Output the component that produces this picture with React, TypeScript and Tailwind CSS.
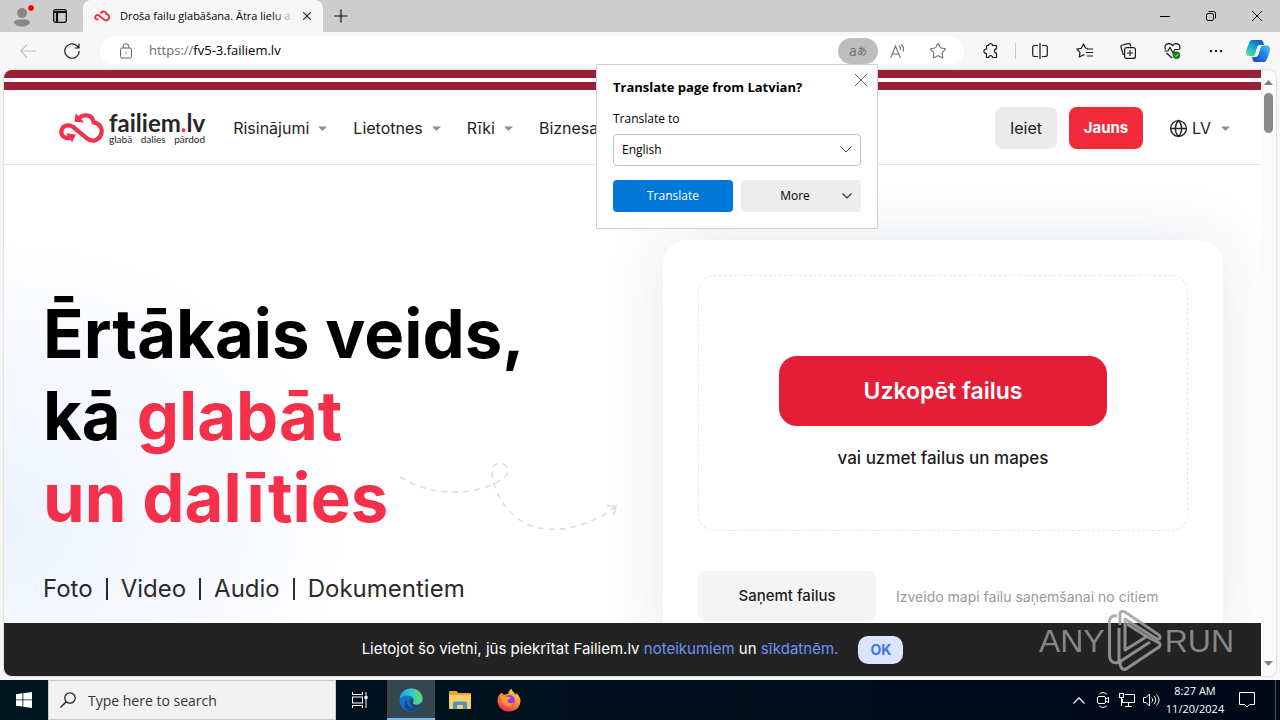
import type { ReactNode } from "react";
import { Globe, Star } from "lucide-react";

const NAV_ITEMS = ["Risinājumi", "Lietotnes", "Rīki", "Biznesa"];
const FILE_TYPES = ["Foto", "Video", "Audio", "Dokumentiem"];

interface IconButtonProps {
    label: string;
    className?: string;
    children: ReactNode;
}

function IconButton({ label, className = "w-11", children }: IconButtonProps) {
    return (
        <button type="button" aria-label={label} className={`flex h-full shrink-0 items-center justify-center ${className}`}>
            {children}
        </button>
    );
}

function Caret() {
    return (
        <svg viewBox="0 0 9 5" className="h-[5px] w-[9px] shrink-0 fill-[#909090]">
            <path d="M0 0.5h9L4.5 5z" />
        </svg>
    );
}

function CloudMark({ className, arrows }: { className: string; arrows?: boolean }) {
    return (
        <svg viewBox="54 48 140 98" className={className} fill="none" stroke="#f0334a" strokeWidth={arrows ? 13 : 17}>
            <path d="M118 68C128 55 158 52 163 80C186 84 192 104 184 120C176 136 158 140 144 130L100 94C86 84 66 90 64 106C62 122 76 130 92 128" />
            {arrows ? (
                <>
                    <path fill="#f0334a" stroke="none" d="M108 52L134 80L104 78z" />
                    <path fill="#f0334a" stroke="none" d="M78 113L108 117L97 141z" />
                </>
            ) : (
                <path d="M112 76L118 64" />
            )}
        </svg>
    );
}

function TabStrip() {
    return (
        <div className="flex h-8 shrink-0 items-stretch bg-[#cdcdcd]">
            <IconButton label="Profile">
                <svg viewBox="0 0 24 24" className="size-6">
                    <circle cx="12" cy="12" r="12" fill="#d0cecd" />
                    <circle cx="12" cy="9" r="5" fill="#8b8683" />
                    <path d="M4 18.500C4 16 7 15.500 12 15.500S20 16 20 18.500C19 21 15.500 22.500 12 22.500S5 21 4 18.500z" fill="#8b8683" />
                    <circle cx="21" cy="4" r="3.500" fill="#e3000f" stroke="#e8d8d8" />
                </svg>
            </IconButton>
            <IconButton label="Tab actions" className="w-8">
                <svg viewBox="0 0 14 14" className="size-[14px]" fill="none" stroke="#111" strokeWidth="1.300">
                    <rect x="0.700" y="0.700" width="12.600" height="12.600" rx="2" />
                    <path d="M1 3h12M4 3v10" strokeWidth="2.200" />
                </svg>
            </IconButton>
            <div className="ml-[7px] flex w-60 items-center rounded-t-lg bg-[#f7f7f7] pr-2 pl-[11px]">
                <CloudMark className="h-3 w-4 shrink-0" />
                <div className="relative ml-[10px] flex-1 overflow-hidden text-[11px] whitespace-nowrap text-black">
                    Droša failu glabāšana. Ātra lielu a
                    <span className="absolute inset-y-0 right-0 w-6 bg-linear-to-r from-transparent to-[#f7f7f7]" />
                </div>
                <button type="button" aria-label="Close tab" className="ml-1 flex size-4 items-center justify-center">
                    <svg viewBox="0 0 8 8" className="size-2 stroke-[#222]" strokeWidth="1.200">
                        <path d="M0 0L8 8M8 0L0 8" />
                    </svg>
                </button>
            </div>
            <IconButton label="New tab" className="w-9">
                <svg viewBox="0 0 14 14" className="size-[14px] stroke-[#111]" strokeWidth="1.200">
                    <path d="M7 0.500V13.500M0.500 7H13.500" />
                </svg>
            </IconButton>
            <div className="ml-auto flex">
                <IconButton label="Minimize" className="w-[46px]">
                    <svg viewBox="0 0 10 10" className="size-[10px] stroke-black"><path d="M0 5.500H10" /></svg>
                </IconButton>
                <IconButton label="Restore" className="w-[46px]">
                    <svg viewBox="0 0 10 10" className="size-[10px]" fill="none" stroke="#111">
                        <rect x="0.500" y="2.500" width="7" height="7" rx="1.500" />
                        <path d="M2.500 0.500H7.500A2 2 0 0 1 9.500 2.500V7.500" />
                    </svg>
                </IconButton>
                <IconButton label="Close" className="w-[46px]">
                    <svg viewBox="0 0 10 10" className="size-[10px] stroke-[#111]"><path d="M0 0L10 10M10 0L0 10" /></svg>
                </IconButton>
            </div>
        </div>
    );
}

function TranslatePopup() {
    return (
        <div className="absolute top-full right-0 z-30 w-[282px] border border-[#d2d2d2] bg-white p-4 text-[12px] text-black">
            <button type="button" aria-label="Close" className="absolute top-2 right-[9px] flex size-[14px] items-center justify-center">
                <svg viewBox="0 0 12 12" className="size-3 stroke-[#666]"><path d="M0 0L12 12M12 0L0 12" /></svg>
            </button>
            <h2 className="-mt-[2px] text-[13px] leading-4 font-bold">Translate page from Latvian?</h2>
            <label htmlFor="target" className="mt-4 block leading-4">Translate to</label>
            <div className="relative mt-[7px]">
                <select id="target" className="h-8 w-full appearance-none rounded-sm border border-[#c0c0c0] bg-white px-2">
                    <option>English</option>
                </select>
                <svg viewBox="0 0 12 7" className="pointer-events-none absolute top-3 right-[9px] h-[7px] w-3" fill="none" stroke="#444">
                    <path d="M0.500 0.500L6 6L11.500 0.500" />
                </svg>
            </div>
            <div className="mt-[14px] grid grid-cols-2 gap-2">
                <button type="button" className="h-8 rounded-sm bg-[#0078d7] text-white">Translate</button>
                <button type="button" className="relative h-8 rounded-sm bg-[#ededed] pr-3">
                    More
                    <svg viewBox="0 0 10 6" className="absolute top-[13px] right-[9px] h-[6px] w-[10px]" fill="none" stroke="#333" strokeWidth="1.200">
                        <path d="M0.500 0.500L5 5L9.500 0.500" />
                    </svg>
                </button>
            </div>
        </div>
    );
}

function Toolbar() {
    return (
        <div className="flex h-[38px] shrink-0 items-center bg-[#f7f7f7] pr-[2px] pl-[6px]">
            <IconButton label="Back">
                <svg viewBox="0 0 16 14" className="h-[14px] w-4" fill="none" stroke="#c4c4c4" strokeWidth="1.200">
                    <path d="M7 0.500L0.800 7L7 13.500M1 7H16" />
                </svg>
            </IconButton>
            <IconButton label="Refresh">
                <svg viewBox="0 0 16 16" className="size-4" fill="none" stroke="#1b1b1b" strokeWidth="1.200">
                    <path d="M15.200 8A7.200 7.200 0 1 1 12.600 2.500L14.800 4.800M15 0.500V5H10.500" />
                </svg>
            </IconButton>
            <div className="ml-[6px] flex h-[30px] flex-1 items-center rounded-full bg-white pr-1 pl-5">
                <svg viewBox="0 0 12 16" className="h-4 w-3" fill="none" stroke="#606060">
                    <rect x="0.500" y="5" width="11" height="10" rx="1.500" />
                    <path d="M3.200 5V3.500A2.800 2.800 0 0 1 8.800 3.500V5" />
                    <circle cx="6" cy="10" r="0.700" fill="#606060" stroke="none" />
                </svg>
                <label htmlFor="address" className="ml-[17px] text-[13px] text-[#6d6d6d]">https://</label>
                <input id="address" defaultValue="fv5-3.failiem.lv" className="min-w-0 flex-1 bg-transparent text-[13px] text-black outline-none" />
                <div className="relative">
                    <button type="button" aria-label="Translate" className="flex h-[26px] w-10 items-center justify-center rounded-full bg-[#bdbdbd] text-[#6c6c6c]">
                        <span className="text-[14px] leading-4">a</span>
                        <span className="font-['Noto_Sans_CJK_JP',sans-serif] text-[10px] leading-4">あ</span>
                    </button>
                    <TranslatePopup />
                </div>
                <IconButton label="Read aloud" className="w-10">
                    <svg viewBox="0 0 16 16" className="size-4" fill="none" stroke="#707070" strokeWidth="1.100">
                        <path d="M0.700 15L5.500 3L10.300 15M2.300 11H8.700M9 3C10.500 4 10.800 5.500 10.500 7M11.300 1.500C13.500 3.200 14 5.500 13.300 8.300" />
                    </svg>
                </IconButton>
                <IconButton label="Favorite" className="mr-[2px] w-10">
                    <Star className="size-[18px] text-[#707070]" strokeWidth={1.4} />
                </IconButton>
            </div>
            <IconButton label="Extensions" className="ml-[5px] w-11">
                <svg viewBox="0 0 16 16" className="size-4" fill="none" stroke="#1b1b1b" strokeWidth="1.200">
                    <path d="M3.500 2.500H5.700C5.500 0 9.700 0 9.500 2.500H13.500V6C10.800 5.500 10.800 10.500 13.500 10V14.500H9.500C9.700 12 5.500 12 5.700 14.500H3.500V10.500C0 10.500 0 6 3.500 6z" strokeLinejoin="round" />
                </svg>
            </IconButton>
            <span className="mx-[2px] h-4 w-px bg-[#c8c8c8]" />
            <IconButton label="Split screen">
                <svg viewBox="0 0 16 16" className="size-4" fill="none" stroke="#1b1b1b" strokeWidth="1.200">
                    <path d="M6 2.500H2.500A1.800 1.800 0 0 0 0.700 4.300V11.700A1.800 1.800 0 0 0 2.500 13.500H6M10 2.500H13.500A1.800 1.800 0 0 1 15.300 4.300V11.700A1.800 1.800 0 0 1 13.500 13.500H10M8 0V16" />
                </svg>
            </IconButton>
            <IconButton label="Favorites">
                <svg viewBox="0 0 17 16" className="h-4 w-[17px]" fill="none" stroke="#1b1b1b" strokeWidth="1.200" strokeLinejoin="round">
                    <path d="M12 5.500L9.500 5L7.500 1L5.300 5.300L0.800 6L4 9.300L3.300 14L7.500 11.800L8.500 12.300M11 6H17M10 9.500H17M11 13H17" />
                </svg>
            </IconButton>
            <IconButton label="Collections">
                <svg viewBox="0 0 16 16" className="size-4" fill="none" stroke="#1b1b1b" strokeWidth="1.200">
                    <path d="M3.500 12L1 4.500A2 2 0 0 1 2.300 2L8 0.700A2 2 0 0 1 10.500 2L11 3.500" />
                    <rect x="4.600" y="4.600" width="10.800" height="10.800" rx="2" />
                    <path d="M10 7V13M7 10H13" />
                </svg>
            </IconButton>
            <IconButton label="Browser essentials">
                <svg viewBox="0 0 17 16" className="h-4 w-[17px]" fill="none" stroke="#1b1b1b" strokeWidth="1.200">
                    <path d="M1.500 6.500C-0.500 1.500 5 -1.500 8.500 2.500C12 -1.500 17.500 1.500 15.500 6.500M0.500 8H4L6 4.500L9 10L11 6.500H15M2.500 10L8 15" />
                    <circle cx="12.500" cy="12.300" r="3.700" fill="#107c10" stroke="none" />
                    <path d="M11 12.500L12 13.500L14.200 11.200" stroke="#fff" strokeWidth="1" />
                </svg>
            </IconButton>
            <IconButton label="Settings and more">
                <svg viewBox="0 0 14 4" className="h-1 w-[14px] fill-[#1b1b1b]">
                    <circle cx="2" cy="2" r="1.200" /><circle cx="7" cy="2" r="1.200" /><circle cx="12" cy="2" r="1.200" />
                </svg>
            </IconButton>
            <IconButton label="Copilot" className="w-10">
                <svg viewBox="0 0 24 22" className="h-[22px] w-6">
                    <defs>
                        <linearGradient id="cop1" x1="0" y1="1" x2="0.700" y2="0">
                            <stop offset="0" stopColor="#5fe08a" /><stop offset="0.450" stopColor="#23b6cf" /><stop offset="1" stopColor="#0b60c4" />
                        </linearGradient>
                        <linearGradient id="cop2" x1="0" y1="1" x2="1" y2="0">
                            <stop offset="0" stopColor="#1246b8" /><stop offset="0.600" stopColor="#2087ee" /><stop offset="1" stopColor="#45cdf5" />
                        </linearGradient>
                    </defs>
                    <path fill="url(#cop1)" d="M7 0H15C17 0 17.500 3 18 5H14C12 5 11.500 6 11 8L9 14C8.500 16 7.500 16 6 16H3C0 16 -0.500 13 0.500 10L3 3C4 0.500 5 0 7 0z" />
                    <path fill="url(#cop2)" d="M17 22H9C7 22 6.500 19 6 17H9C11 17 12 16 12.700 14L14.500 8C15 6 16.500 5.500 18 5.500H21C24 5.500 24.500 8.500 23.500 12L21 19C20 21.500 19 22 17 22z" />
                </svg>
            </IconButton>
        </div>
    );
}

function SiteHeader() {
    return (
        <header>
            <div className="h-2 bg-[#9b2034]" />
            <div className="mt-1 h-2 bg-[#9b2034]" />
            <div className="flex h-[75px] items-center border-b border-[#e2e4e6] bg-white pt-[2px] pr-[31px] pl-[54px] text-[16px] text-[#222]">
                <a href="#" className="flex shrink-0 items-center">
                    <CloudMark className="h-8 w-[46px]" arrows />
                    <span className="ml-[5px] block font-['Lato',sans-serif] text-[#262626]">
                        <span className="block text-[24px] leading-[21px] font-bold">failiem<span className="text-[#f0334a]">.</span>lv</span>
                        <span className="flex justify-between text-[10px] leading-3"><span>glabā</span><span>dalies</span><span>pārdod</span></span>
                    </span>
                </a>
                <nav className="ml-7 flex min-w-0 flex-1 gap-[26px] overflow-hidden">
                    {NAV_ITEMS.map((item) => (
                        <a key={item} href="#" className="flex items-center gap-[9px]">{item}<Caret /></a>
                    ))}
                </nav>
                <a href="#" className="flex h-[42px] w-[62px] items-center justify-center rounded-lg bg-[#ebebeb]">Ieiet</a>
                <a href="#" className="ml-3 flex h-[42px] w-[74px] items-center justify-center rounded-lg bg-[#f22b3c] text-[15px] font-bold text-white">Jauns</a>
                <button type="button" className="ml-[26px] flex items-center">
                    <Globe className="size-[19px] text-[#222]" strokeWidth={1.7} />
                    <span className="ml-1">LV</span>
                    <span className="ml-[10px]"><Caret /></span>
                </button>
            </div>
        </header>
    );
}

function Hero() {
    return (
        <main className="relative flex items-start justify-between bg-[radial-gradient(ellipse_360px_290px_at_-10px_360px,#edf3ff_0%,#f5f8ff_50%,#ffffff_100%)] pr-[38px] pl-[39px]">
            <div className="mt-32">
                <h1 className="text-[67px] leading-[82px] font-bold text-black">
                    Ērtākais veids,<br />kā <span className="text-[#f5304b]">glabāt<br />un dalīties</span>
                </h1>
                <ul className="mt-[34px] flex text-[24px] leading-8 text-[#2b2b2b]">
                    {FILE_TYPES.map((type, i) => (
                        <li key={type} className="flex items-center">
                            {i > 0 && <span className="mx-[13px] h-[22px] w-[2px] bg-[#2b2b2b]" />}
                            {type}
                        </li>
                    ))}
                </ul>
            </div>
            <svg viewBox="0 0 220 72" className="absolute top-[296px] left-[395px] h-[72px] w-[220px]" fill="none" stroke="#dedede" strokeWidth="1.600">
                <path strokeDasharray="6 5" d="M1 16C30 34 68 36 96 22C106 18 112 12 107 5C102 0 92 2 93 11C94 30 108 58 136 66C166 74 198 60 216 46" />
                <path d="M208 45H217L215 54" />
            </svg>
            <section className="mt-[75px] w-[560px] shrink-0 rounded-3xl bg-white p-[35px] shadow-[0_0_60px_rgba(90,105,135,0.16)]">
                <div className="flex h-64 flex-col items-center justify-center rounded-2xl border border-dashed border-[#e6e6e6] pt-5">
                    <button type="button" className="h-[70px] w-[328px] rounded-[18px] bg-[#e31e36] text-[23px] font-semibold text-white">Uzkopēt failus</button>
                    <p className="mt-5 text-[17px] leading-6 font-medium text-[#1c1c1c]">vai uzmet failus un mapes</p>
                </div>
                <div className="mt-10 flex items-center gap-5">
                    <button type="button" className="h-[50px] w-[178px] rounded-lg bg-[#f4f4f4] text-[15px] font-medium text-[#1c1c1c]">Saņemt failus</button>
                    <span className="text-[14px] text-[#999]">Izveido mapi failu saņemšanai no citiem</span>
                </div>
            </section>
        </main>
    );
}

function CookieBar() {
    return (
        <div className="absolute inset-x-0 bottom-0 flex h-[53px] items-center justify-center gap-5 bg-[#232323] text-[15px] text-white">
            <p>
                Lietojot šo vietni, jūs piekrītat Failiem.lv <a href="#" className="text-[#6b93f5]">noteikumiem</a> un <a href="#" className="text-[#6b93f5]">sīkdatnēm.</a>
            </p>
            <button type="button" className="h-7 w-[45px] rounded-[10px] bg-[#dbe5ff] text-[14px] font-bold text-[#3d72e8]">OK</button>
        </div>
    );
}

function Watermark() {
    return (
        <div className="pointer-events-none absolute right-[42px] bottom-1 flex items-center font-['Liberation_Sans_Narrow','Liberation_Sans',sans-serif] text-[32px] leading-[62px] text-[#999]/85">
            <span>ANY</span>
            <svg viewBox="0 0 54 62" className="mx-[3px] h-[62px] w-[54px]" fill="none" stroke="#a0a0a0" strokeOpacity="0.850" strokeWidth="3" strokeLinejoin="round">
                <path d="M9 6C4 5 1 8 1.500 13V46C2 52 6 54 11 52V18" />
                <path d="M12 15V4C12 1 15 1 17 2L51 25C53 27 52 30 49 29L17 9V40L38 27" />
                <path d="M42 32L13 51C11 54 13 61 18 59L51 37C53 35 52 32 49 32L38 26L19 14" />
            </svg>
            <span>RUN</span>
        </div>
    );
}

function Scrollbar() {
    return (
        <div className="flex w-[15px] shrink-0 flex-col items-center bg-[#fbfbfb] py-[10px]">
            <svg viewBox="0 0 9 5" className="h-[5px] w-[9px] fill-[#7f7f7f]"><path d="M0 5L4.500 0L9 5z" /></svg>
            <div className="mt-2 h-10 w-[9px] rounded-full bg-[#8a8a8a]" />
            <svg viewBox="0 0 9 5" className="mt-auto h-[5px] w-[9px] fill-[#7f7f7f]"><path d="M0 0L4.500 5L9 0z" /></svg>
        </div>
    );
}

function Taskbar() {
    return (
        <footer className="flex h-10 shrink-0 items-stretch bg-linear-to-r from-[#00151f] to-[#000918] font-['Open_Sans',sans-serif] text-white">
            <IconButton label="Start" className="w-12">
                <svg viewBox="0 0 16 16" className="size-4 fill-white">
                    <path d="M0 2.200L6.500 1.300V7.500H0zM7.300 1.200L16 0V7.500H7.300zM0 8.300H6.500V14.600L0 13.700zM7.300 8.300H16V16L7.300 14.700z" />
                </svg>
            </IconButton>
            <label className="flex w-72 items-center border border-[#c9c9c9] bg-[#f2f2f2] pl-[11px]">
                <svg viewBox="0 0 16 16" className="size-4 shrink-0" fill="none" stroke="#222" strokeWidth="1.300">
                    <circle cx="10" cy="6" r="5.200" /><path d="M6.200 9.800L0.500 15.500" />
                </svg>
                <input aria-label="Search" placeholder="Type here to search" className="ml-3 w-full bg-transparent text-[14px] outline-none placeholder:text-[#333]" />
            </label>
            <IconButton label="Task view" className="w-12">
                <svg viewBox="0 0 16 16" className="size-4" fill="none" stroke="#fff">
                    <path d="M0.500 0V2.500H10.500V0M0.500 16V13.500H10.500V16M14 0V16" />
                    <rect x="0.500" y="5" width="10" height="6" />
                    <path d="M12.500 5.500H15.500" strokeWidth="3" />
                </svg>
            </IconButton>
            <IconButton label="Microsoft Edge" className="ml-[3px] w-12 border-b-2 border-[#76b9ed] bg-[#35464f] pt-[2px]">
                <svg viewBox="0 0 24 24" className="size-6">
                    <defs>
                        <linearGradient id="edgeTop" x1="0" y1="0.600" x2="1" y2="0.500"><stop offset="0" stopColor="#1e9de0" /><stop offset="0.500" stopColor="#36c6d3" /><stop offset="1" stopColor="#65dc57" /></linearGradient>
                    </defs>
                    <circle cx="12" cy="12" r="11.500" fill="#1272c9" />
                    <path fill="url(#edgeTop)" d="M0.600 11C1.500 4 6.500 0.500 12 0.500C19 0.500 23.500 5.500 23.500 10.500C23.500 14.500 20 16.500 17 16.500C14.500 16.500 13.500 15.500 14 14.500C16 12 14 7.500 9 7.500C5 7.500 2 9 0.600 11z" />
                    <path fill="#35464f" d="M14 14.500C13.500 15.500 14.500 17 17 17C19.500 17 21.500 16 22.800 15L24 17L21 19C17 21 11 19 10.500 14C10.500 12 11.500 11 13 10.500C14.800 12 14.500 13.500 14 14.500z" />
                    <path fill="#0c4a9c" d="M8 12C7.500 18 12 21 20.500 19C15 25.500 7.500 23.500 6 20C4.500 17 6 13.500 8 12z" />
                </svg>
            </IconButton>
            <IconButton label="File Explorer" className="w-[49px]">
                <svg viewBox="0 0 22 18" className="h-[18px] w-[22px]">
                    <path fill="#e8a33d" d="M0 1A1 1 0 0 1 1 0H7.500L9.500 2H21A1 1 0 0 1 22 3V6H0z" />
                    <path fill="#f9cf62" d="M0 4H22V17A1 1 0 0 1 21 18H1A1 1 0 0 1 0 17z" />
                    <path fill="#4a94c8" d="M4 18V12A1.500 1.500 0 0 1 5.500 10.500H16.500A1.500 1.500 0 0 1 18 12V18H14V14H8V18z" />
                </svg>
            </IconButton>
            <IconButton label="Firefox" className="w-[49px]">
                <svg viewBox="0 0 24 24" className="size-6">
                    <defs>
                        <linearGradient id="fox" x1="0.800" y1="0" x2="0.300" y2="1"><stop offset="0" stopColor="#ffe14a" /><stop offset="0.450" stopColor="#ff9330" /><stop offset="1" stopColor="#f5285c" /></linearGradient>
                    </defs>
                    <path fill="url(#fox)" d="M4 5C5 5 6 6 7 7C9 6 10 6 11 6C12 3 13 2 14.500 0.500C15 4 18 5 19 7L19.500 5C22 8 23.500 10 23.500 13C23 20 18 23.500 12 23.500C5 23.500 0.500 18.500 0.500 12.500C0.500 9 2 7 4 5z" />
                    <circle cx="12.300" cy="12.500" r="5.500" fill="#8a3de8" />
                    <path fill="#ff9a35" d="M4 9C8 8 12 9 14 10C12 12 10 11 10.500 13.500C11.500 16 15 15.500 17 14C16 19 8 20 5.500 15z" />
                </svg>
            </IconButton>
            <div className="ml-auto flex">
                <IconButton label="Show hidden icons" className="w-6">
                    <svg viewBox="0 0 12 7" className="h-[7px] w-3" fill="none" stroke="#fff" strokeWidth="1.200"><path d="M0.500 6.500L6 0.800L11.500 6.500" /></svg>
                </IconButton>
                <IconButton label="Meet Now" className="w-6">
                    <svg viewBox="0 0 12 16" className="h-4 w-3" fill="none" stroke="#fff">
                        <path d="M2 2.500C4 0 8 0 10 2.500M2 13.500C4 16 8 16 10 13.500M8.500 7L11.500 5.500V10.500L8.500 9" />
                        <rect x="0.500" y="4.500" width="8" height="7" rx="1.500" />
                    </svg>
                </IconButton>
                <IconButton label="Network" className="w-6">
                    <svg viewBox="0 0 16 14" className="h-[14px] w-4" fill="none" stroke="#fff">
                        <path d="M6 1.500H15.500V9.500H3.500V6M9.500 9.500V13M6 13.500H13" />
                        <rect x="0.500" y="0.500" width="4" height="4" /><path d="M2.500 4.500V13" />
                    </svg>
                </IconButton>
                <IconButton label="Volume" className="w-6">
                    <svg viewBox="0 0 17 14" className="h-[14px] w-[17px]" fill="none" stroke="#fff">
                        <path d="M0.500 4.500H3L6.500 1V13L3 9.500H0.500zM8.500 4.500C10 6 10 8 8.500 9.500M11 3C13.200 5.500 13.200 8.500 11 11M13.500 1.500C16.800 5 16.800 9 13.500 12.500" />
                    </svg>
                </IconButton>
                <div className="flex w-16 flex-col justify-center text-center text-[11px] leading-[18px] whitespace-nowrap">
                    <span>8:27 AM</span>
                    <span>11/20/2024</span>
                </div>
                <IconButton label="Notifications" className="w-10">
                    <svg viewBox="0 0 16 16" className="size-4" fill="none" stroke="#fff"><path d="M0.500 0.500H15.500V12.500H10.500L8 15L5.500 12.500H0.500z" /></svg>
                </IconButton>
                <span className="mr-1 ml-2 w-px bg-[#4d5660]" />
            </div>
        </footer>
    );
}

export default function App() {
    return (
        <div className="flex h-screen flex-col overflow-hidden bg-[#f7f7f7] font-['Open_Sans',sans-serif]">
            <TabStrip />
            <Toolbar />
            <div className="relative mr-1 mb-1 ml-1 flex min-h-0 flex-1 overflow-hidden rounded-lg bg-white shadow-[0_0_2px_rgba(0,0,0,0.3)]">
                <div className="relative min-w-0 flex-1 overflow-hidden font-['Inter',sans-serif]">
                    <SiteHeader />
                    <Hero />
                    <CookieBar />
                </div>
                <Scrollbar />
                <Watermark />
            </div>
            <Taskbar />
        </div>
    );
}
